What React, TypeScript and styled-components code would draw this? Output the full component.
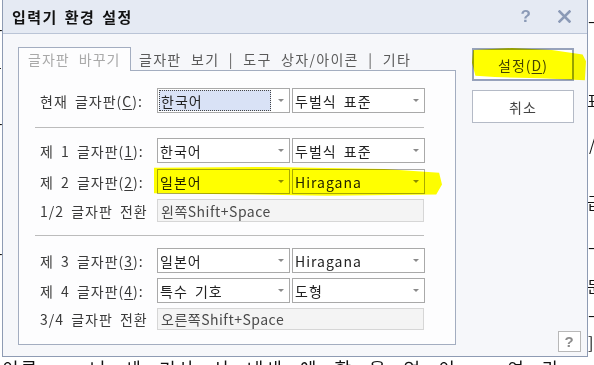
import React from 'react';
import styled, { createGlobalStyle, css } from 'styled-components';

const GlobalStyle = createGlobalStyle`
  html, body {
    margin: 0;
    padding: 0;
    background: #fff;
  }
  body {
    width: 594px;
    height: 365px;
    overflow: hidden;
    font-family: "Noto Sans CJK KR", "Noto Sans", sans-serif;
  }
`;

const Page = styled.div`
  position: relative;
  width: 594px;
  height: 365px;
  overflow: hidden;
  background: #fff;
  display: grid;
  grid-template-columns: 2px 586px 6px;
  grid-template-rows: 357px 8px;
`;

// bits of the document behind the dialog that peek out at the edges
const EdgeStrip = styled.div<{ $side: 'left' | 'right' }>`
  grid-row: 1;
  grid-column: ${(p) => (p.$side === 'left' ? 1 : 3)};
  overflow: hidden;
  display: flex;
  flex-direction: column;
  font-size: 16px;
  line-height: 16px;
  color: #111;
`;

const EdgeGlyph = styled.span<{ $top: number; $shift: number }>`
  display: block;
  margin-top: ${(p) => p.$top}px;
  margin-left: ${(p) => p.$shift}px;
  white-space: nowrap;
`;

const BottomStrip = styled.div`
  grid-row: 2;
  grid-column: 1 / -1;
  overflow: hidden;
  font-size: 18px;
  line-height: 22px;
  color: #111;
  white-space: nowrap;
  letter-spacing: 2px;
  word-spacing: 10px;
  padding-left: 2px;
`;

const Dialog = styled.div`
  grid-row: 1;
  grid-column: 2;
  box-sizing: border-box;
  border: 1px solid #8e9bb3;
  border-top: none;
  background: #f6f7fa;
  display: flex;
  flex-direction: column;
  font-size: 14px;
  letter-spacing: 1px;
  word-spacing: 3px;
`;

const TitleBar = styled.div`
  flex: none;
  height: 33px;
  background: #e5eaf3;
  border-bottom: 1px solid #bac4d6;
  display: flex;
  align-items: center;
  padding: 0 16px 0 9px;
`;

const Title = styled.div`
  flex: 1;
  font-size: 15px;
  font-weight: 700;
  color: #111;
  letter-spacing: 1.5px;
  word-spacing: 2px;
`;

const TitleHelp = styled.span`
  font-family: "Liberation Sans", Arial, sans-serif;
  font-weight: 700;
  font-size: 17px;
  color: #8b9ab6;
  margin-right: 26px;
`;

const Body = styled.div`
  flex: 1;
  display: flex;
  padding: 13px 0 0 15px;
`;

const LeftCol = styled.div`
  width: 438px;
  display: flex;
  flex-direction: column;
`;

const TabStrip = styled.div`
  height: 24px;
  display: flex;
  margin-bottom: -1px;
`;

const Tab = styled.div<{ $active?: boolean }>`
  display: flex;
  align-items: center;
  padding-bottom: 1px;
  white-space: nowrap;
  ${(p) =>
    p.$active
      ? css`
          position: relative;
          z-index: 1;
          width: 113px;
          box-sizing: border-box;
          padding-left: 9px;
          border: 1px solid #a3adc0;
          border-bottom: none;
          background: #fdfdfe;
          color: #a9a9a9;
          word-spacing: 5px;
        `
      : css`
          margin-left: 8px;
          color: #5a5a5a;
          word-spacing: 5px;
          letter-spacing: 1.3px;
        `}
`;

const Panel = styled.div`
  border: 1px solid #a3adc0;
  background: #fdfdfe;
  padding: 17px 30px 14px 21px;
  display: flex;
  flex-direction: column;
`;

const Row = styled.div<{ $gap?: number }>`
  display: flex;
  align-items: center;
  margin-top: ${(p) => p.$gap ?? 0}px;
`;

const Label = styled.div`
  width: 117px;
  color: #3a3a3a;
  white-space: nowrap;
`;

const U = styled.span`
  text-decoration: underline;
  text-underline-offset: 2px;
`;

const Combo = styled.div`
  width: 133px;
  height: 25px;
  box-sizing: border-box;
  border: 1px solid #a9a9a9;
  background: #fff;
  display: flex;
  align-items: stretch;
  & + & {
    margin-left: 2px;
  }
`;

const ComboValue = styled.div<{ $focused?: boolean }>`
  flex: 1;
  display: flex;
  align-items: center;
  padding-left: 2px;
  color: #222;
  white-space: nowrap;
  ${(p) =>
    p.$focused &&
    css`
      margin: 1px 0 1px 1px;
      padding-left: 1px;
      background: #d9e2f6;
      border: 1px dotted #444;
    `}
`;

const Arrow = styled.div`
  width: 18px;
  display: flex;
  align-items: center;
  justify-content: center;
  &::after {
    content: '';
    border-left: 3px solid transparent;
    border-right: 3px solid transparent;
    border-top: 3px solid #8a8a8a;
    margin-left: 2px;
  }
`;

const Field = styled.div<{ $h: number }>`
  width: 267px;
  height: ${(p) => p.$h}px;
  box-sizing: border-box;
  border: 1px solid #d6d6d6;
  background: #f4f4f4;
  color: #4a4a4a;
  display: flex;
  align-items: center;
  padding-left: 3px;
  word-spacing: 0;
  letter-spacing: 0.5px;
`;

const Divider = styled.div<{ $top: number; $bottom: number }>`
  width: 389px;
  height: 1px;
  background: #bcbcbc;
  margin: ${(p) => p.$top}px 0 ${(p) => p.$bottom}px -5px;
`;

const RightCol = styled.div`
  flex: 1;
  display: flex;
  flex-direction: column;
  padding: 1px 0 4px 16px;
`;

const Button = styled.div<{ $default?: boolean }>`
  width: 102px;
  height: 33px;
  box-sizing: border-box;
  background: #fff;
  display: flex;
  align-items: center;
  justify-content: center;
  color: #444;
  word-spacing: 0;
  border: ${(p) => (p.$default ? '2px solid #97a2bb' : '1px solid #b4bac6')};
  & + & {
    margin-top: 9px;
  }
`;

const HelpButton = styled.div`
  margin-top: auto;
  align-self: flex-end;
  margin-right: 6px;
  width: 23px;
  height: 21px;
  box-sizing: border-box;
  border: 1px solid #b8b8b8;
  background: #fff;
  display: flex;
  align-items: center;
  justify-content: center;
  font-family: "Liberation Sans", Arial, sans-serif;
  font-weight: 700;
  font-size: 15px;
  color: #8c8c8c;
`;

// yellow marker strokes drawn over the screenshot
const Marker = styled.div<{ $x: number; $y: number; $w: number; $h: number; $clip: string }>`
  position: absolute;
  left: ${(p) => p.$x}px;
  top: ${(p) => p.$y}px;
  width: ${(p) => p.$w}px;
  height: ${(p) => p.$h}px;
  background: #ffff00;
  mix-blend-mode: multiply;
  clip-path: polygon(${(p) => p.$clip});
  z-index: 5;
`;

const CloseIcon = () => (
  <svg width="13" height="13" viewBox="0 0 13 13">
    <path d="M1.5 1.5 L11.5 11.5 M11.5 1.5 L1.5 11.5" stroke="#8b9ab6" strokeWidth="2.6" strokeLinecap="square" />
  </svg>
);

type ComboDef = { value: string; focused?: boolean };

const ComboBox: React.FC<ComboDef> = ({ value, focused }) => (
  <Combo>
    <ComboValue $focused={focused}>{value}</ComboValue>
    <Arrow />
  </Combo>
);

const leftBits = [
  { ch: 'ㅡ', top: 22, shift: -12 },
  { ch: 'ㅏ', top: 22, shift: -10 },
  { ch: 'ㅡ', top: 40, shift: -12 },
  { ch: 'ㅓ', top: 38, shift: -10 },
  { ch: 'ㅡ', top: 60, shift: -12 },
];

const rightBits = [
  { ch: 'ㅡ', top: 14, shift: 0 },
  { ch: '표', top: 62, shift: -1 },
  { ch: '/', top: 28, shift: 1 },
  { ch: '급', top: 42, shift: -1 },
  { ch: 'ㅡ', top: 30, shift: 0 },
  { ch: '문', top: 22, shift: -1 },
  { ch: 'ㅡ', top: 14, shift: 0 },
  { ch: ']', top: 10, shift: 0 },
];

const App: React.FC = () => {
  return (
    <>
      <GlobalStyle />
      <Page>
        <EdgeStrip $side="left">
          {leftBits.map((b, i) => (
            <EdgeGlyph key={i} $top={b.top} $shift={b.shift}>
              {b.ch}
            </EdgeGlyph>
          ))}
        </EdgeStrip>

        <Dialog>
          <TitleBar>
            <Title>입력기 환경 설정</Title>
            <TitleHelp>?</TitleHelp>
            <CloseIcon />
          </TitleBar>

          <Body>
            <LeftCol>
              <TabStrip>
                <Tab $active>글자판 바꾸기</Tab>
                <Tab>글자판 보기 | 도구 상자/아이콘 | 기타</Tab>
              </TabStrip>
              <Panel>
                <Row>
                  <Label>
                    현재 글자판(<U>C</U>):
                  </Label>
                  <ComboBox value="한국어" focused />
                  <ComboBox value="두벌식 표준" />
                </Row>

                <Divider $top={14} $bottom={10} />

                <Row>
                  <Label>
                    제 1 글자판(<U>1</U>):
                  </Label>
                  <ComboBox value="한국어" />
                  <ComboBox value="두벌식 표준" />
                </Row>
                <Row $gap={6}>
                  <Label>
                    제 2 글자판(<U>2</U>):
                  </Label>
                  <ComboBox value="일본어" />
                  <ComboBox value="Hiragana" />
                </Row>
                <Row $gap={5}>
                  <Label>1/2 글자판 전환</Label>
                  <Field $h={23}>왼쪽Shift+Space</Field>
                </Row>

                <Divider $top={13} $bottom={12} />

                <Row>
                  <Label>
                    제 3 글자판(<U>3</U>):
                  </Label>
                  <ComboBox value="일본어" />
                  <ComboBox value="Hiragana" />
                </Row>
                <Row $gap={5}>
                  <Label>
                    제 4 글자판(<U>4</U>):
                  </Label>
                  <ComboBox value="특수 기호" />
                  <ComboBox value="도형" />
                </Row>
                <Row $gap={5}>
                  <Label>3/4 글자판 전환</Label>
                  <Field $h={22}>오른쪽Shift+Space</Field>
                </Row>
              </Panel>
            </LeftCol>

            <RightCol>
              <Button $default>
                설정(<U>D</U>)
              </Button>
              <Button>취소</Button>
              <HelpButton>?</HelpButton>
            </RightCol>
          </Body>
        </Dialog>

        <EdgeStrip $side="right">
          {rightBits.map((b, i) => (
            <EdgeGlyph key={i} $top={b.top} $shift={b.shift}>
              {b.ch}
            </EdgeGlyph>
          ))}
        </EdgeStrip>

        <BottomStrip>이름 ㅡ 나 세 기사 서 내새 에 할 을 었 이 ㅡ 여 라 ㅡ 사 ㅡ 이</BottomStrip>

        <Marker
          $x={472}
          $y={48}
          $w={114}
          $h={33}
          $clip="1% 6%, 35% 0, 70% 6%, 97% 20%, 100% 40%, 99% 98%, 60% 92%, 20% 88%, 3% 84%, 0 45%"
        />
        <Marker
          $x={154}
          $y={166}
          $w={288}
          $h={31}
          $clip="0 6%, 40% 3%, 80% 10%, 99% 22%, 100% 60%, 98% 92%, 60% 96%, 20% 90%, 0 88%"
        />
      </Page>
    </>
  );
};

export default App;
